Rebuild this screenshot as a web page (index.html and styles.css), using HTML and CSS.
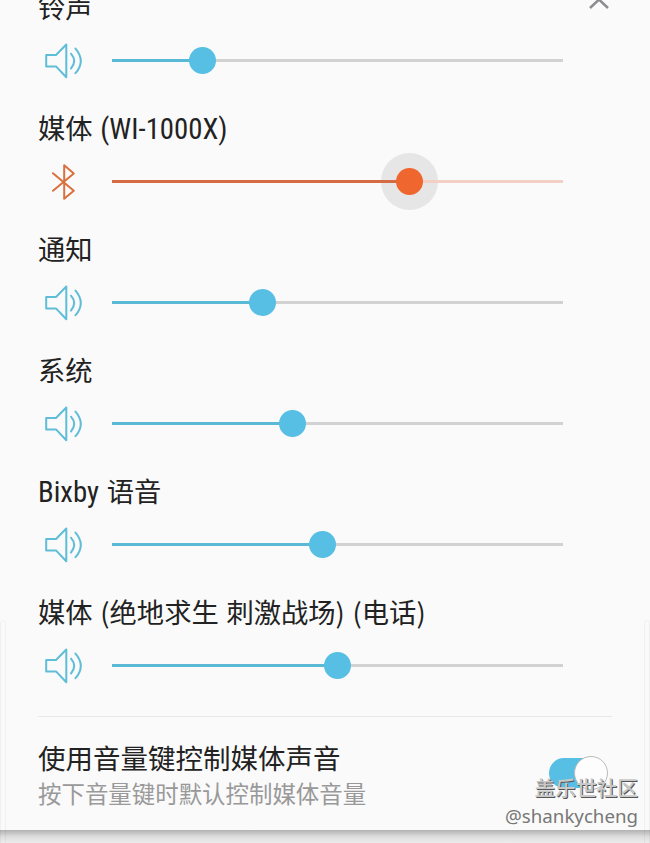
FILE: index.html
```
<!DOCTYPE html>
<html lang="zh-CN">
  <head>
    <meta charset="UTF-8" />
    <meta name="viewport" content="width=device-width, initial-scale=1.0" />
    <title>音量</title>
    <link rel="stylesheet" href="styles.css">
  </head>
  <body>
    <!-- Iconos compartidos -->
    <svg class="sprite" width="0" height="0">
      <symbol id="altavoz" viewBox="0 0 40 36">
        <path d="M1.2 12h9.8L21.3 1.5v32.8L11 23.4H1.2z" />
        <path d="M26 10.7q6.4 7.3 0 14.8" />
        <path d="M30.5 5.6q10.6 12.3 0 24.6" />
      </symbol>
      <symbol id="bluetooth" viewBox="0 0 40 36">
        <path d="M8 9.2 28.8 26.7 19.2 34.8V1.2L28.8 9.4 8 26.8" />
      </symbol>
    </svg>

    <div class="panel">
      <div class="volume">
        <div class="title">铃声</div>
        <div class="control">
          <svg class="icon"><use href="#altavoz" /></svg>
          <div class="track"><div class="fill" style="width: 20%"><span class="thumb"></span></div></div>
        </div>
      </div>

      <!-- Canal activo -->
      <div class="volume active">
        <div class="title">媒体 <span class="latin">(WI-1000X)</span></div>
        <div class="control">
          <svg class="icon"><use href="#bluetooth" /></svg>
          <div class="track"><div class="fill" style="width: 66%"><span class="thumb"></span></div></div>
        </div>
      </div>

      <div class="volume">
        <div class="title">通知</div>
        <div class="control">
          <svg class="icon"><use href="#altavoz" /></svg>
          <div class="track"><div class="fill" style="width: 33.4%"><span class="thumb"></span></div></div>
        </div>
      </div>

      <div class="volume">
        <div class="title">系统</div>
        <div class="control">
          <svg class="icon"><use href="#altavoz" /></svg>
          <div class="track"><div class="fill" style="width: 40%"><span class="thumb"></span></div></div>
        </div>
      </div>

      <div class="volume">
        <div class="title"><span class="latin">Bixby</span> 语音</div>
        <div class="control">
          <svg class="icon"><use href="#altavoz" /></svg>
          <div class="track"><div class="fill" style="width: 46.7%"><span class="thumb"></span></div></div>
        </div>
      </div>

      <div class="volume">
        <div class="title">媒体 (绝地求生 刺激战场) (电话)</div>
        <div class="control">
          <svg class="icon"><use href="#altavoz" /></svg>
          <div class="track"><div class="fill" style="width: 50%"><span class="thumb"></span></div></div>
        </div>
      </div>

      <div class="setting">
        <div>
          <div class="setting-name">使用音量键控制媒体声音</div>
          <div class="setting-hint">按下音量键时默认控制媒体音量</div>
        </div>
        <div class="switch"><span class="knob"></span></div>
      </div>
    </div>

    <svg class="collapse" viewBox="0 0 24 14"><path d="M3 12 12 3.5 21 12" /></svg>
    <div class="edge left"></div>
    <div class="edge right"></div>
    <div class="watermark">
      <div class="community">盖乐世社区</div>
      <div class="user">@shankycheng</div>
    </div>
  </body>
</html>
```

FILE: styles.css
```
* {
  box-sizing: border-box;
}

body {
  margin: 0;
  width: 650px;
  height: 843px;
  position: relative;
  overflow: hidden;
  background: linear-gradient(#b2b2b2 830px, #dedede 837px, #ececec 843px);
  font-family: Roboto, "Noto Sans CJK SC", sans-serif;
  color: #222;
}

.sprite {
  position: absolute;
}

.panel {
  height: 830px;
  overflow: hidden;
  padding: 0 38px;
  background: #fafafa;
  display: flex;
  flex-direction: column;
}

.volume {
  flex: none;
  height: 121px;
}

.volume:first-child {
  margin-top: -14px;
}

.title {
  height: 40px;
  line-height: 40px;
  font-size: 27.3px;
  word-spacing: 1.6px;
  white-space: nowrap;
  font-family: "Noto Sans CJK SC", sans-serif;
}

.latin {
  font-family: "Roboto Condensed", Roboto, sans-serif;
  font-stretch: 75%;
  font-size: 28.8px;
  line-height: 1;
}

.control {
  position: relative;
  z-index: 0;
  height: 68px;
  display: flex;
  align-items: center;
}

.icon {
  width: 40px;
  height: 36px;
  margin: 1px 27px 0 7px;
  fill: none;
  stroke: #5fbdd8;
  stroke-width: 2;
  stroke-linejoin: round;
  stroke-linecap: round;
}

.track {
  width: 451px;
  height: 3px;
  background: #d2d2d2;
}

.fill {
  position: relative;
  height: 3px;
  background: #5ab9d4;
}

.thumb {
  position: absolute;
  right: -13.5px;
  top: -12px;
  width: 27px;
  height: 27px;
  border-radius: 50%;
  background: #56bfe3;
}

.active .icon {
  stroke: #d9703f;
}

.active .track {
  background: #f2d0c3;
}

.active .fill {
  background: #d56b43;
}

.active .thumb {
  background: #f0662f;
}

/* halo al pulsar, queda detrás de la línea */
.active .thumb::before {
  content: "";
  position: absolute;
  z-index: -1;
  inset: -15px;
  border-radius: 50%;
  background: #e6e6e6;
}

.setting {
  flex: none;
  height: 114px;
  margin-top: 4px;
  padding-top: 21px;
  border-top: 1px solid #e8e8e8;
  display: flex;
  justify-content: space-between;
  font-family: "Noto Sans CJK SC", sans-serif;
}

.setting-name {
  height: 38px;
  line-height: 38px;
  font-size: 27.5px;
}

.setting-hint {
  height: 34px;
  line-height: 34px;
  font-size: 23.45px;
  color: #999;
}

.switch {
  width: 56px;
  height: 30px;
  margin: 20px 7px 0 0;
  border-radius: 15px;
  background: #56bfe3;
  display: flex;
  align-items: center;
  justify-content: flex-end;
}

.knob {
  flex: none;
  width: 34px;
  height: 34px;
  margin-right: -3px;
  border: 1px solid #bbb;
  border-radius: 50%;
  background: #fdfdfd;
}

.collapse {
  position: absolute;
  left: 587px;
  top: -4px;
  width: 24px;
  height: 14px;
  fill: none;
  stroke: #8d8d8f;
  stroke-width: 2.5;
}

/* bordes de la ventana */
.edge {
  position: absolute;
  top: 620px;
  height: 240px;
  width: 6px;
  border: 1px solid rgba(0, 0, 0, 0.04);
  border-radius: 3px 3px 0 0;
}

.left {
  left: 0;
}

.right {
  right: 0;
}

.watermark {
  position: absolute;
  right: 12px;
  top: 772px;
  text-align: right;
  white-space: nowrap;
}

.community {
  height: 31px;
  line-height: 31px;
  font-family: "Noto Sans CJK SC", sans-serif;
  font-size: 20.7px;
  font-weight: 500;
  color: #c8c8c8;
  text-shadow: 1px 1px 0 #555;
}

.user {
  height: 26px;
  line-height: 26px;
  font-family: "Noto Sans", sans-serif;
  font-size: 18.7px;
  color: #777;
}
```
